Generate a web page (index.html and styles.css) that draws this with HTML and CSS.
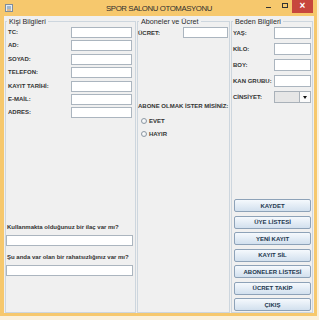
FILE: index.html
```html
<!DOCTYPE html>
<html lang="tr">
<head>
    <meta charset="UTF-8">
    <meta name="viewport" content="width=device-width, initial-scale=1.0">
    <title>SPOR SALONU OTOMASYONU</title>
    <link rel="stylesheet" href="styles.css">
</head>
<body>
    <div class="window">
        <div class="titlebar">
            <svg class="app-icon" width="8" height="8" viewBox="0 0 8 8">
                <rect x="0.5" y="0.5" width="7" height="7" fill="#e4ebf2" stroke="#7f8d9b"/>
                <rect x="2" y="2" width="4" height="3" fill="#9fb6cc"/>
                <rect x="2" y="5.5" width="4" height="1" fill="#c98a3a"/>
            </svg>
            <span class="title">SPOR SALONU OTOMASYONU</span>
            <div class="controls">
                <span class="ctl-min"></span>
                <span class="ctl-max"></span>
                <span class="ctl-close">&#215;</span>
            </div>
        </div>

        <div class="content">
            <fieldset class="panel">
                <legend>Kişi Bilgileri</legend>
                <div class="rows person-rows">
                    <label>TC:</label><input type="text">
                    <label>AD:</label><input type="text">
                    <label>SOYAD:</label><input type="text">
                    <label>TELEFON:</label><input type="text">
                    <label>KAYIT TARİHİ:</label><input type="text">
                    <label>E-MAİL:</label><input type="text">
                    <label>ADRES:</label><input type="text">
                </div>
                <div class="questions">
                    <label>Kullanmakta olduğunuz bir ilaç var mı?</label>
                    <input type="text">
                    <label class="second">Şu anda var olan bir rahatsızlığınız var mı?</label>
                    <input type="text" class="last">
                </div>
            </fieldset>

            <fieldset class="panel">
                <legend>Aboneler ve Ücret</legend>
                <div class="fee-row">
                    <label>ÜCRET:</label><input type="text" class="fee">
                </div>
                <p class="ask">ABONE OLMAK İSTER MİSİNİZ:</p>
                <label class="radio first"><input type="radio" name="abone"> EVET</label>
                <label class="radio"><input type="radio" name="abone"> HAYIR</label>
            </fieldset>

            <fieldset class="panel">
                <legend>Beden Bilgileri</legend>
                <div class="rows body-rows">
                    <label>YAŞ:</label><input type="text">
                    <label>KİLO:</label><input type="text">
                    <label>BOY:</label><input type="text">
                    <label>KAN GRUBU:</label><input type="text">
                    <label>CİNSİYET:</label>
                    <div class="combo"><span class="combo-value"></span><span class="combo-arrow"></span></div>
                </div>
                <div class="actions">
                    <button>KAYDET</button>
                    <button>ÜYE LİSTESİ</button>
                    <button>YENİ KAYIT</button>
                    <button>KAYIT SİL</button>
                    <button>ABONELER LİSTESİ</button>
                    <button>ÜCRET TAKİP</button>
                    <button>ÇIKIŞ</button>
                </div>
            </fieldset>
        </div>
    </div>
</body>
</html>
```

FILE: styles.css
```css
* {
    box-sizing: border-box;
}

body {
    margin: 0;
    background: #fbf1dc;
    font-family: "Liberation Sans", Arial, sans-serif;
    color: #333;
}

.window {
    width: 317px;
    height: 316px;
    background: #f6c86d;
    padding: 0 3px 3px 4px;
    display: flex;
    flex-direction: column;
}

/* title bar */
.titlebar {
    height: 16px;
    flex: none;
    display: grid;
    grid-template-columns: 1fr auto 1fr;
    align-items: center;
}

.app-icon {
    margin-left: 1px;
    display: block;
}

.title {
    font-size: 7.8px;
    letter-spacing: -0.4px;
    color: #2f2f2f;
}

.controls {
    justify-self: end;
    align-self: start;
    display: flex;
    align-items: flex-start;
    margin-right: 1px;
}

.ctl-min {
    width: 5px;
    height: 1px;
    margin-top: 7px;
    margin-right: 11px;
    background: #333;
}

.ctl-max {
    width: 6px;
    height: 5px;
    margin-top: 3px;
    margin-right: 4px;
    border: 1px solid #333;
}

.ctl-close {
    width: 21px;
    height: 13px;
    background: #c7463d;
    color: #fff;
    font-size: 10px;
    font-weight: bold;
    line-height: 12px;
    text-align: center;
}

/* content */
.content {
    flex: 1;
    background: #f0f0f0;
    display: grid;
    grid-template-columns: 131px 93px 82px;
    column-gap: 1px;
    padding: 1px 1px 0 1px;
}

.panel {
    margin: 0;
    padding: 0;
    min-width: 0;
    border: 1px solid #cdd6de;
}

.panel legend {
    font-size: 7.2px;
    line-height: 9px;
    padding: 0 2px;
    margin-left: 1px;
    color: #2b2b2b;
}

label, .ask {
    font-size: 6px;
    font-weight: bold;
    color: #333;
}

input[type="text"] {
    appearance: none;
    margin: 0;
    padding: 0;
    border: 1px solid #abb5bf;
    background: #fff;
    height: 11px;
    width: 100%;
}

.rows {
    display: grid;
    align-items: center;
}

.person-rows {
    grid-template-columns: 1fr 61px;
    row-gap: 2.4px;
    padding: 1px 3px 0 2px;
}

.person-rows label {
    line-height: 11px;
}

.questions {
    margin-top: 104.6px;
    padding-right: 2px;
}

.questions label {
    display: block;
    line-height: 8px;
    padding-left: 1px;
}

.questions input {
    margin-top: 4px;
}

.questions .second {
    margin-top: 4.5px;
}

.questions .last {
    margin-top: 3.5px;
}

.fee-row {
    display: flex;
    justify-content: space-between;
    align-items: center;
    padding: 1px 1px 0 0;
}

.fee-row .fee {
    width: 45px;
}

.ask {
    margin: 63.5px 0 0 0;
    line-height: 8px;
    white-space: nowrap;
}

.radio {
    display: flex;
    align-items: center;
    gap: 2px;
    height: 12px;
    padding-left: 3px;
    margin-top: 1.5px;
}

.radio.first {
    margin-top: 5px;
}

.radio input {
    appearance: none;
    margin: 0;
    width: 6px;
    height: 6px;
    border: 1px solid #8f9aa5;
    border-radius: 50%;
    background: radial-gradient(circle at 40% 40%, #fff, #dde3e9);
}

.body-rows {
    grid-template-columns: 1fr 37px;
    row-gap: 4px;
    padding: 1px 1px 0 1px;
}

.body-rows label {
    line-height: 12px;
}

.body-rows input[type="text"] {
    height: 12px;
}

.combo {
    display: flex;
    height: 12px;
    border: 1px solid #a9b1b9;
    background: #e6e6e6;
}

.combo-value {
    flex: 1;
}

.combo-arrow {
    width: 11px;
    border-left: 1px solid #a9b1b9;
    background: #fbfbfb;
    display: flex;
    align-items: center;
    justify-content: center;
}

.combo-arrow::after {
    content: "";
    border-left: 2.5px solid transparent;
    border-right: 2.5px solid transparent;
    border-top: 3px solid #111;
}

.actions {
    display: flex;
    flex-direction: column;
    gap: 3.5px;
    margin-top: 96px;
    padding: 0 1px 0 2px;
}

.actions button {
    height: 13px;
    margin: 0;
    padding: 0;
    border: 1px solid #8da2b8;
    border-radius: 2px;
    background: linear-gradient(#f5f9fd, #d2e0ee);
    font-family: "Liberation Sans", Arial, sans-serif;
    font-size: 6px;
    font-weight: bold;
    color: #22364d;
    cursor: pointer;
}
```
